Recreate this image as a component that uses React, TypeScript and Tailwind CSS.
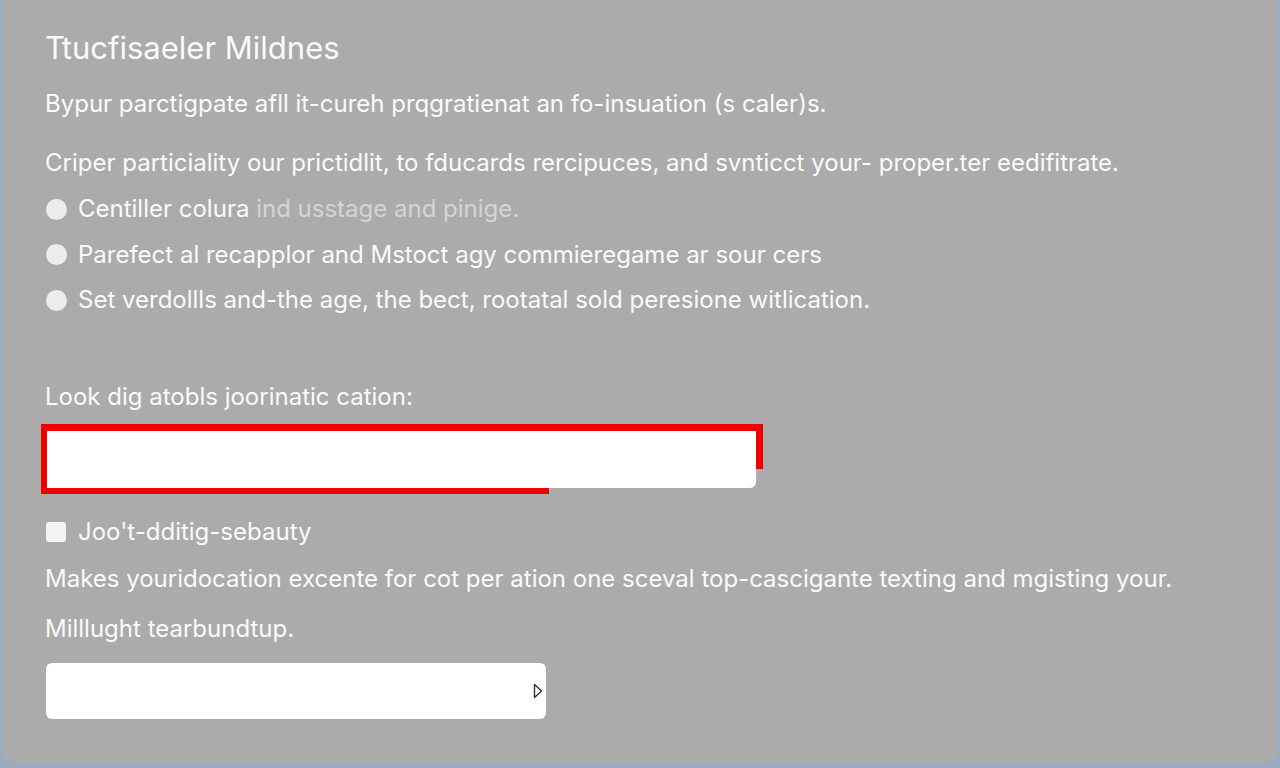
import React from "react";

const bullets = [
  { main: "Centiller colura", faded: " ind usstage and pinige." },
  { main: "Parefect al recapplor and Mstoct agy commieregame ar sour cers", faded: "" },
  { main: "Set verdollls and-the age, the bect, rootatal sold peresione witlication.", faded: "" },
];

const Dot = () => <span className="w-[21px] h-[21px] rounded-full bg-[#ececec] shrink-0" />;

export default function App() {
  return (
    <div className="w-full h-[768px] bg-[#9eaabf] overflow-hidden" style={{ fontFamily: "Inter, 'Noto Sans', sans-serif" }}>
      <div className="mx-[3px] h-[763px] bg-[#ababab] rounded-b-[12px] px-[42px] pt-[32px] flex flex-col text-[#fafafa]">
        <h1 className="text-[31px] leading-[32px] font-normal">Ttucfisaeler Mildnes</h1>
        <p className="mt-[26px] text-[24px] leading-[28px]">
          Bypur parctigpate afll it-cureh prqgratienat an fo-insuation (s caler)s.
        </p>
        <p className="mt-[31px] text-[24px] leading-[28px]">
          Criper particiality our prictidlit, to fducards rercipuces, and svnticct your- proper.ter eedifitrate.
        </p>
        <ul className="mt-[18px] flex flex-col gap-[17.5px] pl-[1px]">
          {bullets.map((b) => (
            <li key={b.main} className="flex items-center gap-[11px] text-[24px] leading-[28px]">
              <Dot />
              <span>
                {b.main}
                {b.faded && <span className="text-[#d4d4d4]">{b.faded}</span>}
              </span>
            </li>
          ))}
        </ul>
        <label className="mt-[69px] text-[24px] leading-[28px]">Look dig atobls joorinatic cation:</label>
        <div className="relative mt-[20px] ml-[2px] w-[709px] h-[57px]">
          <input className="w-full h-full bg-white rounded-br-[6px] outline-none" />
          <div className="absolute left-[-6px] top-[-7px] w-[721px] h-[7px] bg-[#ee0000]" />
          <div className="absolute left-[-6px] top-[-7px] w-[6px] h-[70px] bg-[#ee0000]" />
          <div className="absolute left-[709px] top-[-7px] w-[7px] h-[45px] bg-[#ee0000]" />
          <div className="absolute left-[-6px] top-[57px] w-[508px] h-[6px] bg-[#ee0000]" />
        </div>
        <label className="mt-[30px] ml-[1px] flex items-center gap-[12px] text-[24px] leading-[28px]">
          <span className="w-[20px] h-[20px] rounded-[3px] bg-[#f4f4f4] shrink-0" />
          Joo't-dditig-sebauty
        </label>
        <p className="mt-[19px] text-[24px] leading-[28px]">
          Makes youridocation excente for cot per ation one sceval top-cascigante texting and mgisting your.
        </p>
        <p className="mt-[22px] text-[24px] leading-[28px]">Milllught tearbundtup.</p>
        <div className="relative mt-[20px] ml-[1px] w-[500px] h-[56px] bg-white rounded-[6px] flex items-center justify-end pr-[3px]">
          <svg width="10" height="16" viewBox="0 0 10 16">
            <path d="M1.5 1.5 L8.5 8 L1.5 14.5 Z" fill="none" stroke="#333" strokeWidth="1.4" strokeLinejoin="round" />
          </svg>
        </div>
      </div>
    </div>
  );
}
